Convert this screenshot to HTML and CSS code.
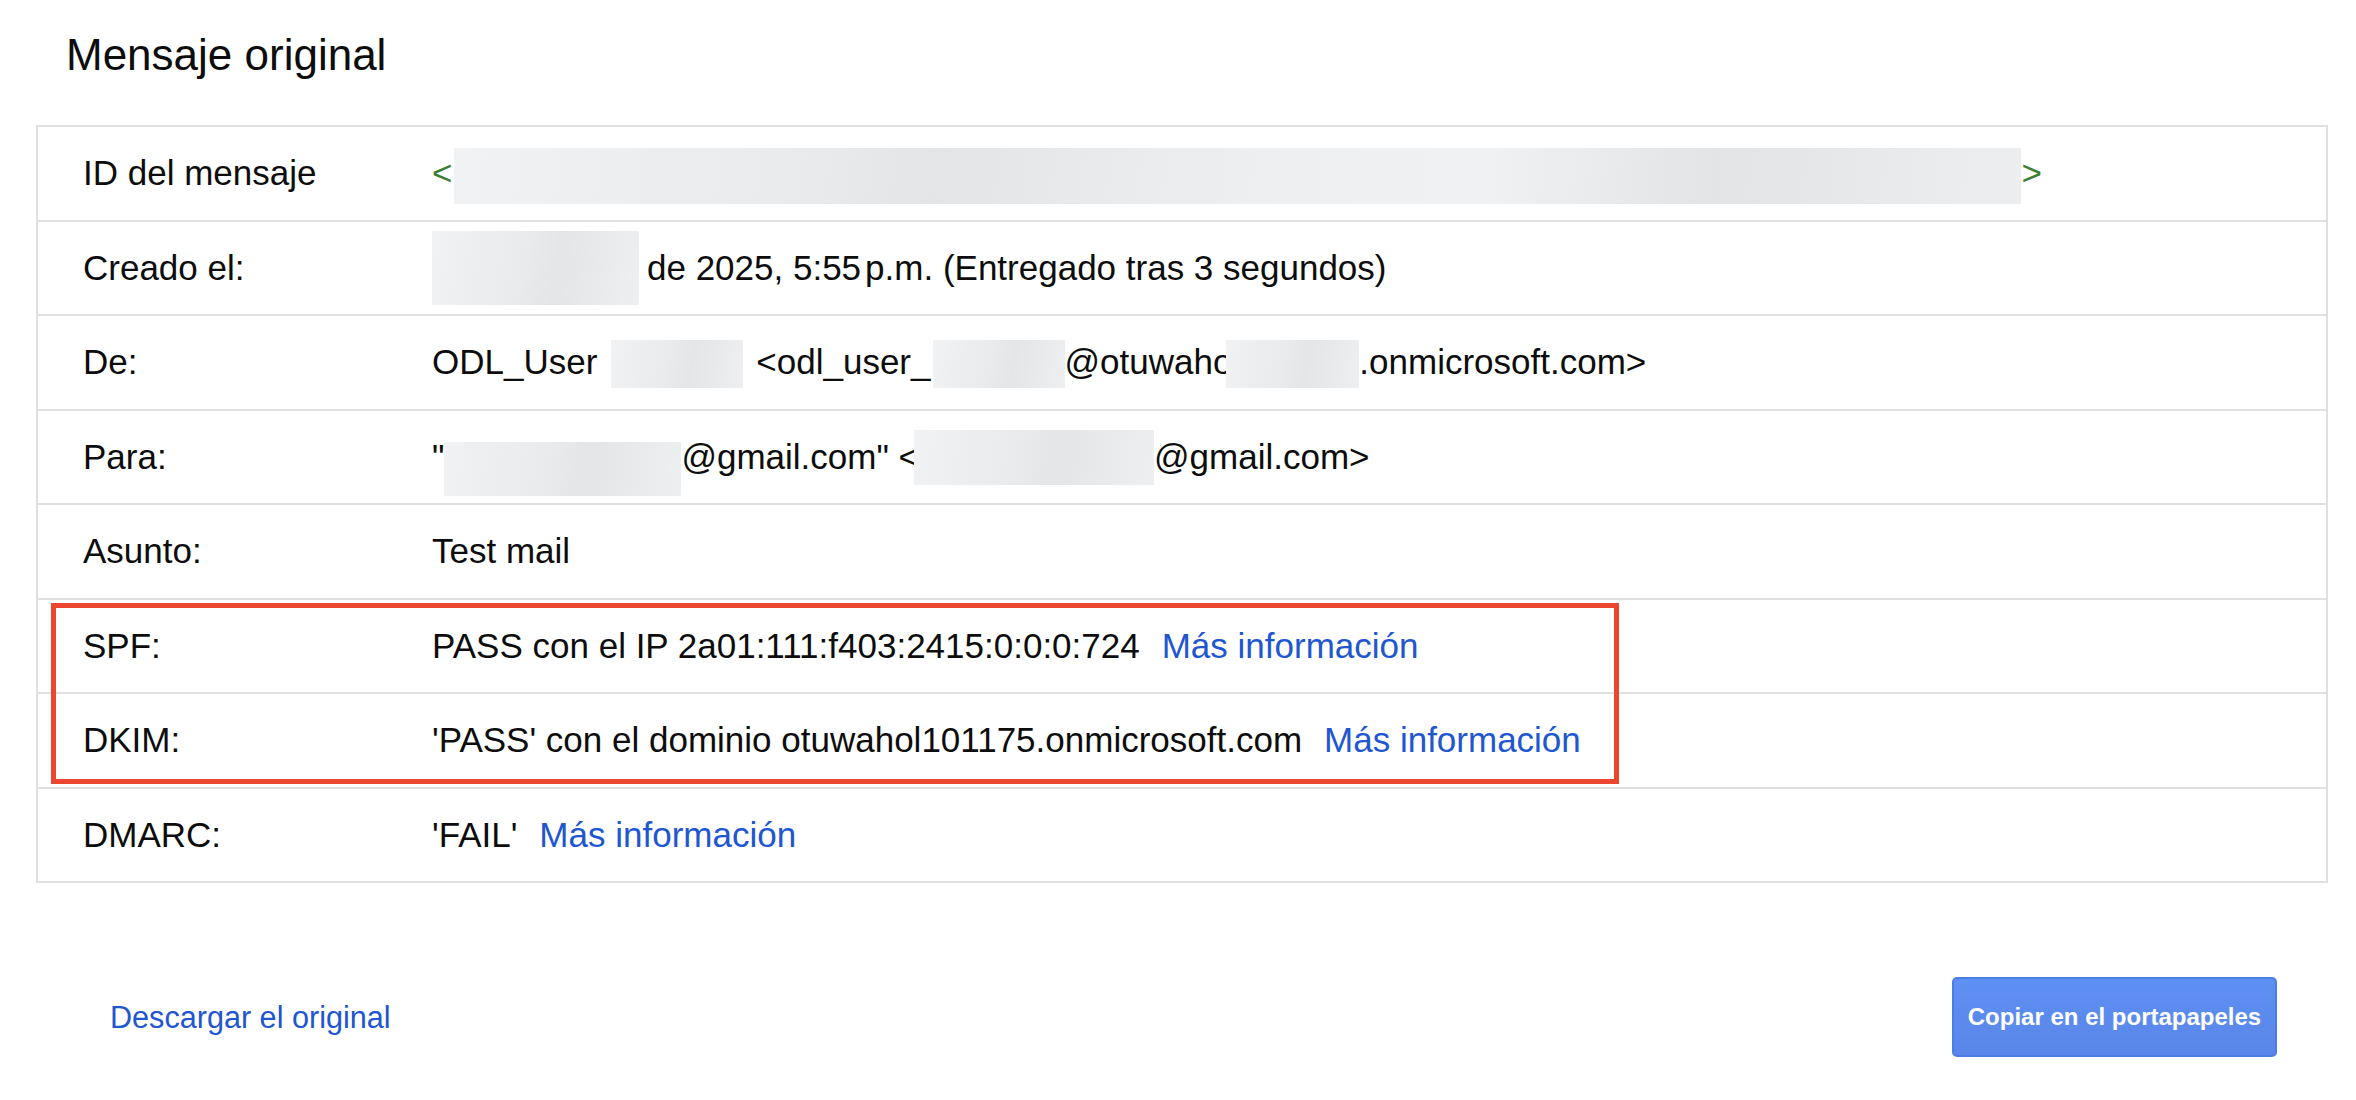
FILE: index.html
```html
<!DOCTYPE html>
<html lang="es">
<head>
<meta charset="utf-8">
<title>Mensaje original</title>
<link rel="stylesheet" href="styles.css">
</head>
<body>
<div class="page">
  <h1 class="title">Mensaje original</h1>
  <div class="table">
    <div class="row">
      <div class="label">ID del mensaje</div>
      <div class="value"><span class="green">&lt;</span><span class="redact r-id1"></span><span class="redact r-id2"></span><span class="green">&gt;</span></div>
    </div>
    <div class="row">
      <div class="label">Creado el:</div>
      <div class="value"><span class="redact r-date"></span><span class="gap6"></span><span>de 2025, 5:55<span class="thin"></span>p.m. (Entregado tras 3 segundos)</span></div>
    </div>
    <div class="row">
      <div class="label">De:</div>
      <div class="value"><span>ODL_User</span><span class="redact r-name"></span><span>&lt;odl_user_</span><span class="redact r-user"></span><span>@otuwaho</span><span class="redact r-dom"></span><span>.onmicrosoft.com&gt;</span></div>
    </div>
    <div class="row">
      <div class="label">Para:</div>
      <div class="value"><span>"</span><span class="redact r-to1"></span><span>@gmail.com" &lt;</span><span class="redact r-to2"></span><span>@gmail.com&gt;</span></div>
    </div>
    <div class="row">
      <div class="label">Asunto:</div>
      <div class="value"><span>Test mail</span></div>
    </div>
    <div class="row">
      <div class="label">SPF:</div>
      <div class="value"><span>PASS con el IP 2a01:111:f403:2415:0:0:0:724</span><a class="link" href="#">Más información</a></div>
    </div>
    <div class="row">
      <div class="label">DKIM:</div>
      <div class="value"><span>'PASS' con el dominio otuwahol101175.onmicrosoft.com</span><a class="link" href="#">Más información</a></div>
    </div>
    <div class="row row-last">
      <div class="label">DMARC:</div>
      <div class="value"><span>'FAIL'</span><a class="link" href="#">Más información</a></div>
    </div>
    <div class="highlight"></div>
  </div>
  <div class="footer">
    <a class="download" href="#">Descargar el original</a>
    <button class="copy" type="button">Copiar en el portapapeles</button>
  </div>
</div>
</body>
</html>
```

FILE: styles.css
```css
html, body {
  margin: 0;
  padding: 0;
  background: #ffffff;
}

body {
  font-family: "Liberation Sans", Arial, Helvetica, sans-serif;
  color: #0d0d0d;
}

.page {
  padding: 29px 28px 0 36px;
}

.title {
  margin: 0 0 44px 30px;
  font-size: 44px;
  line-height: 52px;
  font-weight: normal;
  color: #0d0d0d;
}

.table {
  position: relative;
  border: 2px solid #e0e0e0;
}

.row {
  display: flex;
  align-items: center;
  height: 92.5px;
  border-bottom: 2px solid #e0e0e0;
  font-size: 35px;
}

.row-last {
  border-bottom: none;
}

.label {
  box-sizing: border-box;
  width: 394px;
  flex: 0 0 394px;
  padding-left: 45px;
}

.value {
  display: flex;
  align-items: center;
  white-space: pre;
}

.green {
  color: #3b7d35;
}

.thin {
  display: inline-block;
  width: 4px;
}

.gap6 {
  display: inline-block;
  width: 8px;
}

.redact {
  display: block;
  background: linear-gradient(100deg, #f1f2f3 0%, #e9eaeb 45%, #e4e5e7 60%, #eeeff0 100%);
}

.r-id1 {
  width: 803px;
  height: 56px;
  margin-left: 2px;
  margin-top: 5px;
}

.r-id2 {
  width: 764px;
  height: 56px;
  margin-top: 5px;
  background: linear-gradient(95deg, #eeeff0 0%, #f0f1f2 30%, #e3e4e6 60%, #eceeef 100%);
}

.r-date {
  width: 207px;
  height: 74px;
}

.r-name {
  width: 132px;
  height: 48px;
  margin-left: 14px;
  margin-right: 13px;
  margin-top: 3px;
}

.r-user {
  width: 132px;
  height: 48px;
  margin-left: 2px;
  margin-top: 3px;
}

.r-dom {
  width: 133px;
  height: 48px;
  margin-left: -6px;
  margin-top: 3px;
}

.r-to1 {
  width: 237px;
  height: 54px;
  margin-top: 25px;
}

.r-to2 {
  width: 240px;
  height: 55px;
  margin-left: -5px;
  margin-top: 1px;
}

.link {
  color: #2156d1;
  text-decoration: none;
  margin-left: 22px;
}

.highlight {
  position: absolute;
  left: 13px;
  top: 476px;
  width: 1568px;
  height: 181px;
  box-sizing: border-box;
  border: 5px solid #ea4630;
  pointer-events: none;
}

.footer {
  display: flex;
  justify-content: space-between;
  align-items: center;
  margin-top: 94px;
  padding: 0 51px 0 74px;
}

.download {
  color: #2156d1;
  text-decoration: none;
  font-size: 30.6px;
}

.copy {
  box-sizing: border-box;
  height: 80px;
  width: 325px;
  padding: 0;
  border: 2px solid #4c7de6;
  border-radius: 5px;
  background: linear-gradient(#5e90f3, #5985e8);
  color: #ffffff;
  font-family: "Liberation Sans", Arial, Helvetica, sans-serif;
  font-size: 24px;
  font-weight: bold;
}
```
